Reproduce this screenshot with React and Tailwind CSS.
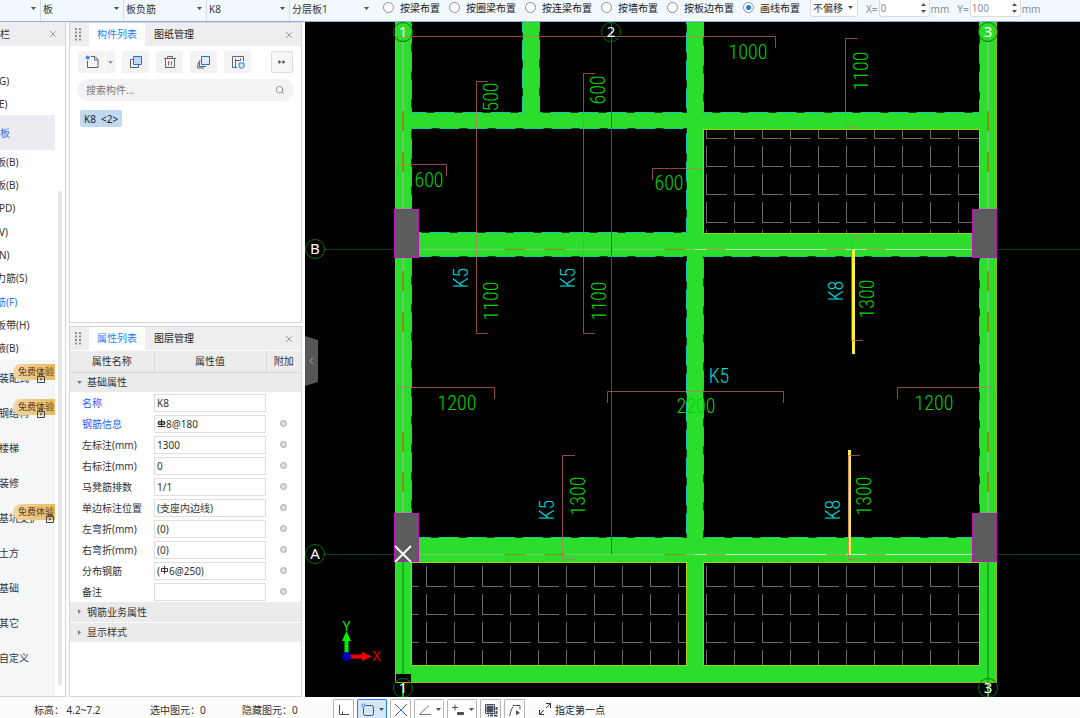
import { useState } from "react";
import { X, Search } from "lucide-react";

const layoutModes = ["按梁布置", "按圈梁布置", "按连梁布置", "按墙布置", "按板边布置", "画线布置"];

const slabItems = [
  { name: "板(B)" },
  { name: "板(B)" },
  { name: "(PD)" },
  { name: "(V)" },
  { name: "(N)" },
  { name: "力筋(S)" },
  { name: "筋(F)", active: true },
  { name: "板带(H)" },
  { name: "腋(B)" },
];

const categories = [
  { name: "装配式", trial: true },
  { name: "钢结构", trial: true },
  { name: "楼梯" },
  { name: "装修" },
  { name: "基坑支护", trial: true },
  { name: "土方" },
  { name: "基础" },
  { name: "其它" },
  { name: "自定义" },
];

const attributes = [
  { id: "name", label: "名称", value: "K8", blue: true, noExtra: true },
  { id: "rebar", label: "钢筋信息", value: "8@180", symbol: "hrb", blue: true },
  { id: "left", label: "左标注(mm)", value: "1300" },
  { id: "right", label: "右标注(mm)", value: "0" },
  { id: "stool", label: "马凳筋排数", value: "1/1" },
  { id: "side", label: "单边标注位置", value: "(支座内边线)" },
  { id: "bendLeft", label: "左弯折(mm)", value: "(0)" },
  { id: "bendRight", label: "右弯折(mm)", value: "(0)" },
  { id: "spread", label: "分布钢筋", value: "6@250)", prefix: "(", symbol: "hpb" },
  { id: "remark", label: "备注", value: "" },
];

export default function App() {
  return (
    <div className="h-screen flex flex-col overflow-hidden bg-[#fcfcfc] font-['Noto_Sans','Noto_Sans_CJK_SC',sans-serif] text-[10px] leading-4 text-[#333]">
      <TopBar />
      <main className="flex-1 min-h-0 flex">
        <Sidebar />
        <div className="w-[233px] shrink-0 mx-[3px] flex flex-col gap-[3px]">
          <ComponentPanel />
          <AttributePanel />
        </div>
        <Viewport />
      </main>
      <StatusBar />
    </div>
  );
}

function Caret({ className = "" }) {
  return (
    <svg viewBox="0 0 5 3" className={`w-[5px] h-[3px] shrink-0 ${className}`} fill="#4b5060">
      <path d="M0 0h5L2.500 3z" />
    </svg>
  );
}

function TopSelect({ label, value, className }) {
  return (
    <div className={`relative flex items-center ${className}`}>
      <select aria-label={label} className="w-full h-full appearance-none bg-transparent pl-[2px] outline-none" defaultValue={value}>
        <option>{value}</option>
      </select>
      <Caret className="absolute right-1 pointer-events-none" />
    </div>
  );
}

function TopBar() {
  const [mode, setMode] = useState("画线布置");

  return (
    <header className="h-[22px] shrink-0 flex bg-[#f1f9fe] border-b border-[#8fb0e0] whitespace-nowrap overflow-hidden">
      <TopSelect label="楼层" value="" className="w-[41px] shrink-0 pb-1 border-r border-[#d5dde6]" />
      <TopSelect label="构件大类" value="板" className="w-[83px] shrink-0 pb-1 border-r border-[#d5dde6]" />
      <TopSelect label="构件类型" value="板负筋" className="w-[83px] shrink-0 pb-1 border-r border-[#d5dde6]" />
      <TopSelect label="构件" value="K8" className="w-[83px] shrink-0 pb-1 border-r border-[#d5dde6]" />
      <TopSelect label="分层" value="分层板1" className="w-[83px] shrink-0 pb-1" />
      <div className="flex items-center gap-[9px] pl-[10px] pb-[6px] text-[#222]">
        {layoutModes.map((item) => (
          <label key={item} className="flex items-center gap-[6px]">
            <input
              type="radio"
              name="mode"
              checked={mode === item}
              onChange={() => setMode(item)}
              className="appearance-none w-[11px] h-[11px] rounded-full border border-[#8b8f96] bg-white checked:bg-[radial-gradient(circle,#1e78e6_2px,#fff_3px)]"
            />
            {item}
          </label>
        ))}
      </div>
      <TopSelect label="偏移" value="不偏移" className="w-12 h-[17px] ml-[10px] shrink-0 bg-white border border-t-0 border-[#d9dde2] rounded-b-[3px] pb-px" />
      <Offset label="X=" value="0" />
      <Offset label="Y=" value="100" />
    </header>
  );
}

function Offset({ label, value }) {
  return (
    <div className="flex h-[17px] items-center ml-2 text-[#8a8f96] shrink-0">
      <label htmlFor={label} className="mr-px">{label}</label>
      <div className="flex items-center w-[51px] h-full bg-white border border-t-0 border-[#d9dde2] rounded-b-[3px] pr-[3px]">
        <input id={label} defaultValue={value} className="w-0 flex-1 pl-px outline-none" />
        <div className="flex flex-col gap-1">
          <button type="button" aria-label={`${label} +`}>
            <Caret className="block rotate-180" />
          </button>
          <button type="button" aria-label={`${label} -`}>
            <Caret className="block" />
          </button>
        </div>
      </div>
      <span className="ml-px">mm</span>
    </div>
  );
}

function Sidebar() {
  return (
    <aside className="w-[66px] shrink-0 flex flex-col bg-white border-r border-b border-[#d6d6d6] overflow-hidden whitespace-nowrap">
      <div className="h-6 shrink-0 flex items-center justify-between bg-[#eeeef0] pr-[7px]">
        <span>栏</span>
        <button type="button" aria-label="关闭"><X className="w-[10px] h-[10px] text-[#888]" strokeWidth={2} /></button>
      </div>
      <div className="flex-1 min-h-0 flex justify-between pr-[3px]">
        <nav className="w-[55px] overflow-hidden flex flex-col pt-[23px]">
          <a href="#g" className="h-[23px] -ml-1 flex items-center shrink-0">(G)</a>
          <a href="#e" className="h-[23px] -ml-1 flex items-center shrink-0">(E)</a>
          <a href="#slab" className="h-[35px] flex items-center shrink-0 bg-[#ebecf1] text-[#3f6fd8]">板</a>
          <ul className="h-[210px] shrink-0 grid auto-rows-fr">
            {slabItems.map((item, i) => (
              <li key={i} className="-ml-1 flex items-center">
                <a href="#slab" className={item.active ? "text-[#1e80f0]" : ""}>{item.name}</a>
              </li>
            ))}
          </ul>
          <ul className="flex-1 bg-[#f4f6f8]">
            {categories.map((item) => (
              <li key={item.name} className="relative h-[35px] flex items-center -ml-px">
                <a href="#category">{item.name}</a>
                {item.trial && <TrialBadge wide={item.name.length > 3} />}
              </li>
            ))}
          </ul>
        </nav>
        <div className="w-1 mt-[145px] mb-[10px] rounded-full bg-[#e7e7e7]" />
      </div>
    </aside>
  );
}

function TrialBadge({ wide }) {
  return (
    <>
      <span className="absolute right-0 top-1 w-[42px] h-4 pl-[5px] rounded-l-full rounded-br-md bg-gradient-to-r from-[#f2d6a4] to-[#e8b95c] text-[9px] text-[#5f3510] overflow-hidden">
        免费体验
      </span>
      <svg viewBox="0 0 8 9" className={`absolute top-[14px] w-2 h-[9px] ${wide ? "right-px" : "right-[10px]"}`} fill="none" stroke="#3f4757">
        <path d="M.5 2.500h7v6h-7zM2.500 2.500v-2h3v2M4 4.500v2M3 5h2" />
      </svg>
    </>
  );
}

function PanelHeader({ tabs }) {
  return (
    <div className="h-[23px] shrink-0 flex items-stretch bg-[#eeeef0] pl-[5px] pr-[7px]">
      <svg viewBox="0 0 7 13" className="w-[7px] h-[13px] self-center mr-[7px]" fill="#8d8d92">
        {[0, 3.5, 7, 10.5].map((y) => (
          <g key={y}>
            <rect x="0" y={y} width="2" height="2" />
            <rect x="4" y={y} width="2" height="2" />
          </g>
        ))}
      </svg>
      <button type="button" className="px-2 pb-[2px] bg-white text-[#1e80f0]">{tabs[0]}</button>
      <button type="button" className="px-[9px] pb-[2px] text-[#222]">{tabs[1]}</button>
      <button type="button" aria-label="关闭" className="ml-auto">
        <X className="w-[10px] h-[10px] text-[#888]" strokeWidth={2} />
      </button>
    </div>
  );
}

function ToolButton({ label, children }) {
  return (
    <button type="button" aria-label={label} className="w-[27px] h-[22px] flex items-center justify-center rounded-[2px] bg-[#f3f3f4]">
      <svg viewBox="0 0 14 14" className="w-[14px] h-[14px]" fill="none" stroke="#5b6270">
        {children}
      </svg>
    </button>
  );
}

function ComponentPanel() {
  return (
    <section className="h-[301px] shrink-0 bg-white border border-[#d6d6d6]">
      <PanelHeader tabs={["构件列表", "图纸管理"]} />
      <div className="flex gap-[7px] pl-2 pr-2 pt-[5px]">
        <div className="flex">
          <ToolButton label="新建">
            <path d="M6 1.500h4l3 3v8H2.500V6M9.500 1.500v3.500H13" />
            <path d="M1 1l3.500 3.500M4.500 1L1 4.500M2.700.5v4.500M.5 2.700H5" stroke="#2a80ee" />
          </ToolButton>
          <button type="button" aria-label="新建选项" className="w-[10px] h-[22px] flex items-center justify-center bg-[#f3f3f4] border-l border-white">
            <Caret className="opacity-60" />
          </button>
        </div>
        <ToolButton label="复制">
          <path d="M4 4.500H1.500v8h8V10" />
          <path d="M4.500 1.500h8v8h-8z" fill="#bcd8fa" stroke="#2272dc" />
        </ToolButton>
        <ToolButton label="删除">
          <path d="M1 3.500h12M4.500 3V1.500h5V3M2.500 3.500v9h9v-9" />
          <path d="M5.500 6v4.500M8.500 6v4.500" stroke="#e04848" />
        </ToolButton>
        <ToolButton label="层间复制">
          <path d="M3 5Q2 8 2.500 11.500H9M1.500 7L.5 13H7" />
          <path d="M4.500 1.500h8v8h-8z" fill="#dcebff" stroke="#2272dc" />
        </ToolButton>
        <ToolButton label="存档">
          <path d="M6 12.500H1.500v-11h11V6M4.500 3.500v9M9.500 3.500V6M4.500 5.500h5" />
          <path d="M8 8h5v4l-2.500 1.500L8 12z" fill="#d3e6ff" stroke="#2a80ee" />
        </ToolButton>
        <button type="button" aria-label="更多" className="w-[22px] h-[22px] ml-auto flex items-center justify-center rounded-[2px] border border-[#dcdcdc] bg-[#f6f6f6]">
          <svg viewBox="0 0 8 6" className="w-2 h-[6px]" fill="#444">
            <path d="M.5 1l3 2-3 2zM4.500 1l3 2-3 2z" />
          </svg>
        </button>
      </div>
      <div className="h-[22px] mx-[7px] mt-[6px] px-[9px] flex items-center rounded-full bg-[#f3f3f3]">
        <input aria-label="搜索构件" placeholder="搜索构件..." className="flex-1 w-0 outline-none placeholder:text-[#777]" />
        <Search className="w-[10px] h-[10px] text-[#888]" />
      </div>
      <button type="button" className="ml-[10px] mt-[9px] h-[17px] px-1 rounded-[2px] bg-[#c0d8f1] text-[#222]">
        K8 &nbsp;&lt;2&gt;
      </button>
    </section>
  );
}

function RebarSymbol({ kind }) {
  return (
    <svg viewBox="0 0 9 9" className="w-[9px] h-[9px] shrink-0 mb-px" fill="none" stroke="#333">
      <path d="M4.500 0v8" />
      {kind === "hrb" ? <path d="M1.500 2.500h6v3h-6zM.5 4h8M.5 7.500h8" /> : <path d="M1.500 2.500h6v3h-6z" />}
    </svg>
  );
}

function AttributePanel() {
  return (
    <section className="flex-1 min-h-0 bg-white border border-[#d6d6d6]">
      <PanelHeader tabs={["属性列表", "图层管理"]} />
      <table className="w-full table-fixed border-collapse mt-px">
        <colgroup>
          <col className="w-[84px]" />
          <col />
          <col className="w-[35px]" />
        </colgroup>
        <thead>
          <tr className="h-[21px] bg-[#ececec] text-[#333]">
            <th className="p-0 font-normal border-r border-b border-[#d8d8d8]">属性名称</th>
            <th className="p-0 font-normal border-r border-b border-[#d8d8d8]">属性值</th>
            <th className="p-0 font-normal border-b border-[#d8d8d8]">附加</th>
          </tr>
        </thead>
        <tbody>
          <GroupRow name="基础属性" open />
          {attributes.map((row) => (
            <tr key={row.id} className="h-[21px]">
              <td className="p-0 pl-3 whitespace-nowrap">
                <label htmlFor={row.id} className={row.blue ? "text-[#1f5fff]" : ""}>{row.label}</label>
              </td>
              <td className="p-0">
                <div className="h-[18px] w-28 flex items-center border border-[#dedede] bg-white pl-[2px]">
                  {row.prefix}
                  {row.symbol && <RebarSymbol kind={row.symbol} />}
                  <input id={row.id} defaultValue={row.value} className="flex-1 w-0 h-4 outline-none" />
                </div>
              </td>
              <td className="p-0">
                {!row.noExtra && (
                  <input
                    type="checkbox"
                    aria-label={`${row.label} 附加`}
                    className="block mx-auto appearance-none w-[7px] h-[7px] rounded-full border border-[#aaa] bg-[#dcdce0]"
                  />
                )}
              </td>
            </tr>
          ))}
          <GroupRow name="钢筋业务属性" />
          <GroupRow name="显示样式" />
        </tbody>
      </table>
    </section>
  );
}

function GroupRow({ name, open }) {
  return (
    <tr className="h-5 bg-[#ebebeb] border-b border-white">
      <td colSpan={3} className="p-0">
        <button type="button" className="flex items-center gap-[5px] pl-[7px]">
          <Caret className={open ? "opacity-70" : "opacity-70 -rotate-90"} />
          {name}
        </button>
      </td>
    </tr>
  );
}

// rooms cut out of the green beam plate: [x, y, width, height]
const rooms = [
  [411, 12, 112, 101],
  [539, 12, 148, 101],
  [703, 12, 277, 101],
  [411, 129, 276, 104],
  [411, 257, 276, 281],
  [703, 257, 277, 281],
];

const hatchedRooms = [
  [703, 129, 277, 105],
  [411, 562, 276, 104],
  [703, 562, 277, 104],
];

const rebarLines = [
  "M397.500 48V36.500H775.500V48",
  "M488 81.500H476.500V333.500H488",
  "M595 73.500H583.500V333.500H595",
  "M397.500 176V164.500H446.500V176",
  "M652.500 180V168.500H701.500V180",
  "M858 38.500H845.500V126.500H858",
  "M863 236.500H851.500V340.500H863",
  "M397.500 399V387.500H494.500V399",
  "M607.500 403V391.500H783.500V403",
  "M897.500 399V387.500H993.500V399",
  "M575 455.500H562.500V559.500H575",
  "M860 455.500H848.500V559.500H860",
];

// centre of each annotation, v = reads bottom to top
const notes = [
  { t: "500", x: 491, y: 97, v: true },
  { t: "600", x: 598, y: 90, v: true },
  { t: "1000", x: 748, y: 52 },
  { t: "1100", x: 861, y: 71, v: true },
  { t: "600", x: 429, y: 180 },
  { t: "600", x: 669, y: 183 },
  { t: "K5", x: 461, y: 278, v: true, c: true },
  { t: "1100", x: 491, y: 301, v: true },
  { t: "K5", x: 568, y: 278, v: true, c: true },
  { t: "1100", x: 599, y: 301, v: true },
  { t: "K8", x: 836, y: 291, v: true, c: true },
  { t: "1300", x: 867, y: 299, v: true },
  { t: "1200", x: 457, y: 403 },
  { t: "2200", x: 696, y: 406 },
  { t: "K5", x: 719, y: 376, c: true },
  { t: "1200", x: 934, y: 403 },
  { t: "K5", x: 547, y: 510, v: true, c: true },
  { t: "1300", x: 578, y: 496, v: true },
  { t: "K8", x: 833, y: 510, v: true, c: true },
  { t: "1300", x: 864, y: 496, v: true },
];

const axisMarks = [
  ["1", 403, 32],
  ["2", 611, 32],
  ["3", 988, 32],
  ["B", 315, 249],
  ["A", 315, 554],
  ["1", 403, 688],
  ["3", 988, 688],
];

function Viewport() {
  return (
    <div className="relative flex-1 min-w-0 bg-black overflow-hidden">
      <svg viewBox="305 22 775 675" preserveAspectRatio="xMinYMin slice" className="block w-full h-full">
        <defs>
          <pattern id="hatch" x="706" y="138" width="28" height="28" patternUnits="userSpaceOnUse">
            <path d="M0 .5H21M.5 8V28" stroke="#6a6a6a" fill="none" />
          </pattern>
        </defs>

        <path d="M325 249.500H1080M325 554.500H1080" stroke="#004600" />
        <rect x="395" y="12" width="601" height="670" fill="#2bde2b" />
        <path d="M395.500 12V682.500H996.500V12" fill="none" stroke="#a8b400" />

        {rooms.map(([x, y, w, h]) => (
          <g key={`${x}-${y}`}>
            <rect x={x + 0.5} y={y - 0.5} width={w - 1} height={h} stroke="#063c08" />
            <rect x={x + 0.5} y={y - 0.5} width={w - 1} height={h} fill="none" stroke="#12c8a8" strokeDasharray="20 8" />
          </g>
        ))}
        {hatchedRooms.map(([x, y, w, h]) => (
          <g key={`${x}-${y}`}>
            <rect x={x} y={y} width={w} height={h} />
            <rect x={x + 0.5} y={y + 0.5} width={w - 1} height={h - 1} fill="url(#hatch)" stroke="#a8d000" />
          </g>
        ))}

        {/* axis lines where they run over the beams */}
        <g fill="none">
          <path d="M403 42V514M988 42V514" stroke="#6cc86c" strokeWidth="2" />
          <path d="M403 562V697M988 562V697" stroke="#1cb01c" strokeWidth="2" />
          <path d="M419 249.500H972M419 554.500H972" stroke="#78c878" />
          <path d="M695 249.500H972M695 554.500H972" stroke="#c0f0c0" />
          <path
            d="M505 249.500h20M545 249.500h20M665 249.500h20M505 554.500h20M545 554.500h20M665 554.500h20"
            stroke="#8c8c14"
          />
          <path
            d="M706 249.500h20M826 249.500h20M866 249.500h20M706 554.500h20M826 554.500h20M866 554.500h20"
            stroke="#c8965a"
          />
          {[403, 988].map((x) => (
            <path
              key={x}
              d={`M${x} 111v20M${x} 152v20M${x} 271v20M${x} 312v20M${x} 432v20M${x} 472v20`}
              stroke="#8c8c14"
              strokeWidth="2"
            />
          ))}
          <path d="M611.500 22V554" stroke="#c81414" />
        </g>

        <g fill="#5c5c5c" stroke="#c010c0">
          <rect x="394.500" y="209.500" width="24" height="48" />
          <rect x="972.500" y="209.500" width="24" height="48" />
          <rect x="394.500" y="513.500" width="24" height="48" />
          <rect x="972.500" y="513.500" width="24" height="48" />
        </g>

        <path d="M853.500 250V354M849.500 450V554" stroke="#ffee3c" strokeWidth="3" />
        <path d={rebarLines.join("")} fill="none" stroke="#d06868" strokeOpacity=".7" />

        <g
          className="font-['Roboto_Condensed','Liberation_Sans_Narrow','Open_Sans',sans-serif] text-[20px] font-light"
          textAnchor="middle"
        >
          {notes.map((n, i) => (
            <text
              key={i}
              x={n.x}
              y={n.y + 7}
              transform={n.v ? `rotate(-90 ${n.x} ${n.y})` : undefined}
              fill={n.c ? "#00d4d4" : "#00d400"}
            >
              {n.t}
            </text>
          ))}
        </g>

        <rect x="396" y="674" width="15" height="8" />
        <g className="text-[15px]" textAnchor="middle">
          {axisMarks.map(([name, x, y]) => (
            <g key={`${name}-${y}`}>
              <circle cx={x} cy={y} r="9.500" fill="none" stroke="#087008" />
              <text x={x} y={y + 5} fill="#fff">{name}</text>
            </g>
          ))}
        </g>
        <path d="M395 546l16 16M411 546l-16 16" stroke="#fff" strokeWidth="2" />

        <path d="M346.500 656V640" stroke="#00f000" strokeWidth="4" />
        <path d="M342 641l4.500-10 4.500 10z" fill="#00f000" />
        <path d="M347 656.500H363" stroke="#f00000" strokeWidth="4" />
        <path d="M362 652l10 4.500-10 4.500z" fill="#f00000" />
        <circle cx="346.500" cy="656.500" r="4.500" fill="#0000b8" />
        <g className="text-[14px]" textAnchor="middle">
          <text x="346.500" y="631" fill="#00f000">Y</text>
          <text x="376.500" y="661" fill="#f00000">X</text>
        </g>
      </svg>
      <button type="button" aria-label="收起面板" className="absolute left-0 top-[314px]">
        <svg viewBox="0 0 14 50" className="block w-[14px] h-[50px]">
          <path d="M0 0L13 4V46L0 50z" fill="#565656" />
          <path d="M8.500 22l-4 3 4 3" fill="none" stroke="#999" />
        </svg>
      </button>
    </div>
  );
}

function StatusButton({ label, active, caret, children }) {
  return (
    <button
      type="button"
      aria-label={label}
      className={`h-5 flex items-center justify-center gap-1 rounded-t-[2px] border border-b-0 ${caret ? "w-[30px]" : "w-[21px]"} ${active ? "bg-[#d5e5fa] border-[#2c7be0]" : "bg-white border-[#b5b5b8]"}`}
    >
      <svg viewBox="0 0 14 14" className="w-[14px] h-[14px] shrink-0" fill="none" stroke="#4b5060">
        {children}
      </svg>
      {caret && <Caret />}
    </button>
  );
}

function StatusBar() {
  return (
    <footer className="h-[21px] shrink-0 flex bg-[#fcfcfc] pl-[34px] pt-[2px] whitespace-nowrap overflow-hidden">
      <div className="flex w-[299px] shrink-0 pt-[3px]">
        <span className="w-[116px]">标高： 4.2~7.2</span>
        <span className="w-[92px]">选中图元：0</span>
        <span>隐藏图元：0</span>
      </div>
      <div className="flex gap-[3px]">
        <StatusButton label="正交">
          <path d="M2.500 2v9.500H12M5.500 8.500v3" />
        </StatusButton>
        <StatusButton label="捕捉" active caret>
          <path d="M4.500 2.500h6q2 0 2 2v6q0 2-2 2h-6q-2 0-2-2v-6" />
          <circle cx="2.500" cy="2.500" r="1.500" stroke="#2a80ee" />
        </StatusButton>
        <StatusButton label="交点">
          <path d="M1 1l12 12M13 1L1 13" />
          <path d="M5 5l4 4M9 5l-4 4" stroke="#2a80ee" />
        </StatusButton>
        <StatusButton label="角度" caret>
          <path d="M11 2.500L1.500 11.500H13" stroke="#777" />
        </StatusButton>
        <StatusButton label="偏移点" caret>
          <path d="M1 4.500h6M4 1.500v6" />
          <path d="M6.500 9.500h6v2h-6z" fill="#4b5060" />
        </StatusButton>
        <StatusButton label="图元">
          <path d="M1.500 1.500h9v9h-9z" />
          <path d="M3 3h6v6H3z" fill="#4b5060" />
          <path d="M12.500 4v8.500H4" strokeWidth="2" strokeDasharray="3 1" />
        </StatusButton>
        <StatusButton label="折线">
          <path d="M1.500 13Q3 6 5 3.500M5 2.500h7v4" />
          <path d="M8 7l4 3-4 2z" fill="#4b5060" stroke="none" />
        </StatusButton>
      </div>
      <div className="flex gap-[3px] ml-[13px] pt-[3px]">
        <svg viewBox="0 0 14 14" className="w-[14px] h-[14px]" fill="none" stroke="#333">
          <path d="M8 6l4.500-4.500M8 1.500h4.500V6M6 8l-4.500 4.500M1.500 8v4.500H6" />
        </svg>
        <span className="text-[#222]">指定第一点</span>
      </div>
    </footer>
  );
}
